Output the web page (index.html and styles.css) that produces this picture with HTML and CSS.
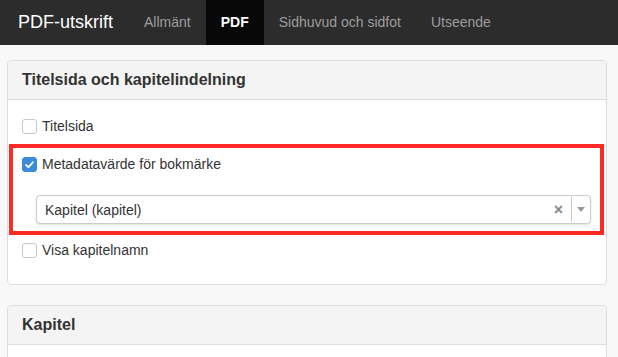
FILE: index.html
```html
<!DOCTYPE html>
<html lang="sv">

<head>
    <meta charset="UTF-8" />
    <meta name="viewport" content="width=device-width, initial-scale=1.0" />
    <title>PDF-utskrift</title>
    <link rel="stylesheet" href="styles.css">
</head>

<body>
    <nav class="navbar">
        <a class="brand" href="#">PDF-utskrift</a>
        <a class="nav-link" href="#">Allmänt</a>
        <a class="nav-link active" href="#">PDF</a>
        <a class="nav-link" href="#">Sidhuvud och sidfot</a>
        <a class="nav-link" href="#">Utseende</a>
    </nav>

    <div class="content">
        <div class="panel">
            <div class="panel-heading">Titelsida och kapitelindelning</div>
            <div class="panel-body">
                <label class="check"><span class="box"></span> Titelsida</label>

                <div class="highlight">
                    <label class="check"><span class="box checked">
                        <svg viewBox="0 0 16 16" width="11" height="11"><path d="M3 8.5 L6.5 12 L13 4.5" fill="none" stroke="#fff" stroke-width="2.6" stroke-linecap="round" stroke-linejoin="round"/></svg>
                    </span> Metadatavärde för bokmärke</label>

                    <div class="select">
                        <span class="select-value">Kapitel (kapitel)</span>
                        <span class="select-clear">×</span>
                        <span class="select-divider"></span>
                        <span class="select-arrow"></span>
                    </div>
                </div>

                <label class="check last"><span class="box"></span> Visa kapitelnamn</label>
            </div>
        </div>

        <div class="panel">
            <div class="panel-heading">Kapitel</div>
            <div class="panel-body"></div>
        </div>
    </div>
</body>

</html>
```

FILE: styles.css
```css
body {
    background-color: #f8f8f8;
    font-family: 'Liberation Sans', Arial, sans-serif;
    font-size: 14px;
    color: #333;
    margin: 0;
    padding: 0;
}

.navbar {
    display: flex;
    align-items: center;
    height: 45px;
    background-color: #2c2c2c;
    padding-left: 3px;
}

.navbar a {
    text-decoration: none;
}

.brand {
    color: #fff;
    font-size: 18px;
    padding: 0 16px 0 15px;
    line-height: 45px;
}

.nav-link {
    color: #9d9d9d;
    font-size: 14px;
    padding: 0 15px;
    line-height: 45px;
}

.nav-link.active {
    color: #fff;
    font-weight: bold;
    background-color: #080808;
}

.content {
    padding: 15px 11px 0 7px;
}

.panel {
    background-color: #fff;
    border: 1px solid #ddd;
    border-radius: 4px;
    margin-bottom: 20px;
}

.panel-heading {
    background-color: #f4f4f4;
    border-bottom: 1px solid #ddd;
    border-radius: 4px 4px 0 0;
    padding: 0 14px;
    height: 38px;
    line-height: 38px;
    font-size: 16px;
    font-weight: bold;
    color: #333;
}

.panel-body {
    padding: 16px 14px 24px;
}

.check {
    display: flex;
    align-items: center;
    height: 20px;
    line-height: 20px;
}

.box {
    width: 13px;
    height: 13px;
    border: 1px solid #c8c8c8;
    border-radius: 3px;
    background-color: #fff;
    margin-right: 5px;
    display: flex;
    align-items: center;
    justify-content: center;
}

.box.checked {
    background-color: #3a8bdb;
    border-color: #3a8bdb;
}

.highlight {
    border: 4px solid #ff2a21;
    margin: 8px -12px 5px -13px;
    padding: 6px 9px 7px 9px;
}

.select {
    display: flex;
    align-items: center;
    height: 27px;
    margin: 21px 0 0 14px;
    border: 1px solid #ccc;
    border-radius: 4px;
    background-color: #fff;
    box-shadow: 0 1px 2px rgba(0, 0, 0, 0.12);
}

.select-value {
    flex: 1;
    padding-left: 8px;
}

.select-clear {
    color: #888;
    font-weight: bold;
    font-size: 16px;
    margin-right: 8px;
}

.select-divider {
    width: 1px;
    height: 25px;
    background-color: #ccc;
}

.select-arrow {
    width: 0;
    height: 0;
    border-left: 4px solid transparent;
    border-right: 4px solid transparent;
    border-top: 5px solid #999;
    margin: 0 5px 0 5px;
}
```
